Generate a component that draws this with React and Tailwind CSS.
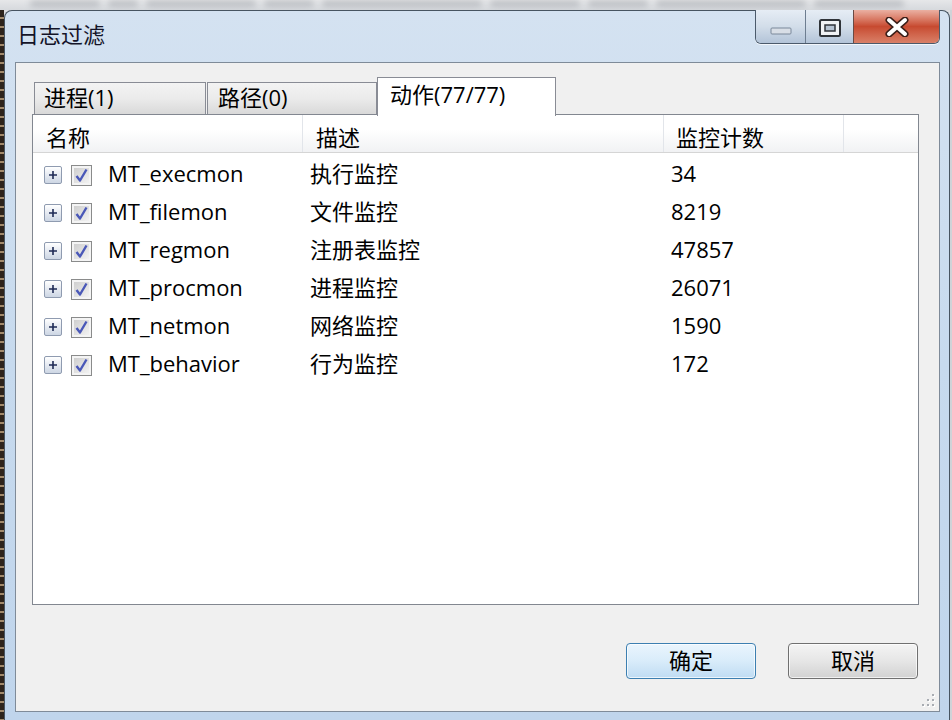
import React from "react";

const rows = [
  ["MT_execmon", "执行监控", "34"],
  ["MT_filemon", "文件监控", "8219"],
  ["MT_regmon", "注册表监控", "47857"],
  ["MT_procmon", "进程监控", "26071"],
  ["MT_netmon", "网络监控", "1590"],
  ["MT_behavior", "行为监控", "172"],
];

function PlusBox() {
  return (
    <div className="w-[18px] h-[18px] shrink-0 rounded-[2px] border border-[#8f9bb0] bg-gradient-to-b from-white to-[#cdd6e4] flex items-center justify-center">
      <svg width="12" height="12" viewBox="0 0 12 12">
        <path d="M2 6H10M6 2V10" stroke="#1f2b55" strokeWidth="1.6" />
      </svg>
    </div>
  );
}

function CheckBox() {
  return (
    <div className="w-[21px] h-[21px] shrink-0 border border-[#8a8b8b] bg-[#f4f4f4] p-[2px]">
      <div className="w-full h-full bg-gradient-to-br from-[#cfcfcf] to-[#f2f2f2] flex items-center justify-center">
        <svg width="15" height="15" viewBox="0 0 15 15">
          <path d="M2.5 8 L6 12.5 L12.5 1.5" fill="none" stroke="#4a58b8" strokeWidth="2.4" strokeLinejoin="round" />
        </svg>
      </div>
    </div>
  );
}

function WinButtons() {
  return (
    <div className="ml-auto mr-[9px] -mt-px flex h-[34px] rounded-b-[6px] border border-t-0 border-[#4b5a6b] overflow-hidden shadow-[0_1px_0_rgba(255,255,255,0.7)]">
      <div className="w-[50px] h-full bg-gradient-to-b from-[#e6edf5] via-[#d2dde9] to-[#b3c4d8] border-r border-[#6d7d90] flex justify-center items-start">
        <svg width="22" height="8" viewBox="0 0 22 8" className="mt-[17px]">
          <rect x="1" y="1" width="20" height="6" rx="1" fill="#d8dee6" stroke="#7b889a" strokeWidth="1" />
        </svg>
      </div>
      <div className="w-[48px] h-full bg-gradient-to-b from-[#e6edf5] via-[#d2dde9] to-[#b3c4d8] border-r border-[#6a4a44] flex justify-center items-center">
        <svg width="22" height="18" viewBox="0 0 22 18" className="mt-[2px]">
          <rect x="1" y="1" width="20" height="16" rx="1.5" fill="#f0f2f4" stroke="#2f3338" strokeWidth="2" />
          <rect x="6" y="6" width="10" height="6" fill="#b6c3d2" stroke="#2f3338" strokeWidth="1.5" />
        </svg>
      </div>
      <div className="w-[85px] h-full bg-gradient-to-b from-[#eab0a2] via-[#c74a30] to-[#d98068] flex justify-center items-center">
        <svg width="28" height="20" viewBox="0 0 28 20" className="mt-[1px]">
          <path d="M6 3 L22 17 M22 3 L6 17" stroke="#3b1e18" strokeWidth="7" strokeLinecap="round" />
          <path d="M6 3 L22 17 M22 3 L6 17" stroke="#ffffff" strokeWidth="4" strokeLinecap="round" />
        </svg>
      </div>
    </div>
  );
}

function Grip() {
  const dots = [
    [10, 0],
    [5, 5],
    [10, 5],
    [0, 10],
    [5, 10],
    [10, 10],
  ];
  return (
    <svg width="14" height="14" viewBox="0 0 14 14" className="absolute right-[3px] bottom-[3px]">
      {dots.map(([x, y], i) => (
        <g key={i}>
          <rect x={x + 1} y={y + 1} width="2" height="2" fill="#ffffff" />
          <rect x={x} y={y} width="2" height="2" fill="#a8acb2" />
        </g>
      ))}
    </svg>
  );
}

const blobs = [70, 30, 110, 50, 160, 90, 60, 150, 90];

export default function App() {
  return (
    <div className="w-[952px] h-[720px] overflow-hidden flex flex-col bg-[#dcdde0] font-['Open_Sans','Noto_Sans_CJK_SC',sans-serif] text-black">
      <div className="h-[10px] shrink-0 overflow-hidden bg-gradient-to-b from-[#e6e7e9] to-[#d6d9dd] flex gap-[8px] pl-[30px]">
        {blobs.map((w, i) => (
          <div key={i} className="h-[5px] mt-[1px] rounded-full bg-[#4a505a] opacity-30 blur-[3px] shrink-0" style={{ width: w }} />
        ))}
      </div>
      <div className="flex flex-1 min-h-0">
        <div className="w-[4px] shrink-0 bg-[repeating-linear-gradient(180deg,#2e241c_0px,#2e241c_7px,#a28a6c_7px,#a28a6c_9px)]" />
        <div className="w-[946px] shrink-0 h-full flex flex-col rounded-t-[8px] border border-b-0 border-[#475461] bg-gradient-to-b from-[#d4e2f1] via-[#c7daee] to-[#c0d5ec]">
          <div className="h-[51px] shrink-0 flex items-start">
            <div className="pl-[12px] h-[48px] flex items-center text-[22px] text-[#141428] leading-none pb-[2px]">日志过滤</div>
            <WinButtons />
          </div>
          <div className="ml-[10px] w-[925px] h-[650px] shrink-0 border border-[#7f8b99] bg-[#f0f0f0] flex flex-col relative">
            <div className="ml-[16px] mt-[14px] w-[887px] flex flex-col">
              <div className="flex items-end h-[37px] pl-[2px] text-[22px] leading-none">
                <div className="w-[172px] h-[32px] border border-b-0 border-[#898c95] bg-gradient-to-b from-[#f3f3f3] via-[#ebebeb] to-[#d9d9d9] flex items-center pl-[9px] pb-[4px]">
                  进程(1)
                </div>
                <div className="ml-[1px] w-[170px] h-[32px] border border-b-0 border-[#898c95] bg-gradient-to-b from-[#f3f3f3] via-[#ebebeb] to-[#d9d9d9] flex items-center pl-[10px] pb-[4px]">
                  路径(0)
                </div>
                <div className="w-[179px] h-[39px] -mb-[2px] relative z-10 border border-b-0 border-[#898c95] bg-white flex items-center pl-[12px] pb-[6px]">
                  动作(77/77)
                </div>
              </div>
              <div className="h-[491px] border border-[#828790] bg-white flex flex-col">
                <div className="h-[38px] shrink-0 flex border-b border-[#d5d5d5] bg-gradient-to-b from-white from-40% to-[#f1f2f4] text-[22px] leading-none">
                  <div className="w-[270px] border-r border-[#e2e5ea] flex items-center pl-[13px] pt-[6px]">名称</div>
                  <div className="w-[361px] border-r border-[#e2e5ea] flex items-center pl-[13px] pt-[6px]">描述</div>
                  <div className="w-[180px] border-r border-[#e2e5ea] flex items-center pl-[12px] pt-[6px]">监控计数</div>
                  <div className="flex-1" />
                </div>
                <div className="pt-[3px] flex flex-col text-[22px] leading-none">
                  {rows.map(([name, desc, count]) => (
                    <div key={name} className="h-[38px] flex items-center">
                      <div className="w-[270px] pl-[11px] flex items-center">
                        <PlusBox />
                        <div className="ml-[9px]">
                          <CheckBox />
                        </div>
                        <span className="ml-[16px] -mt-[4px]">{name}</span>
                      </div>
                      <div className="w-[361px] pl-[7px] -mt-[4px]">{desc}</div>
                      <div className="w-[180px] pl-[7px] -mt-[4px]">{count}</div>
                    </div>
                  ))}
                </div>
              </div>
            </div>
            <div className="mt-[38px] flex justify-end gap-[32px] pr-[21px] text-[22px] leading-none">
              <div className="w-[130px] h-[36px] rounded-[4px] border border-[#3c7fb1] bg-gradient-to-b from-[#eaf5fd] via-[#d9ecfa] to-[#bfdcf3] shadow-[inset_0_0_0_1px_rgba(255,255,255,0.7)] flex items-center justify-center pb-[2px]">
                确定
              </div>
              <div className="w-[130px] h-[36px] rounded-[4px] border border-[#707070] bg-gradient-to-b from-[#f4f4f4] via-[#e6e6e6] to-[#d2d2d2] shadow-[inset_0_0_0_1px_rgba(255,255,255,0.7)] flex items-center justify-center pb-[2px]">
                取消
              </div>
            </div>
            <Grip />
          </div>
        </div>
        <div className="flex-1 bg-[#cfd3d8]" />
      </div>
    </div>
  );
}
